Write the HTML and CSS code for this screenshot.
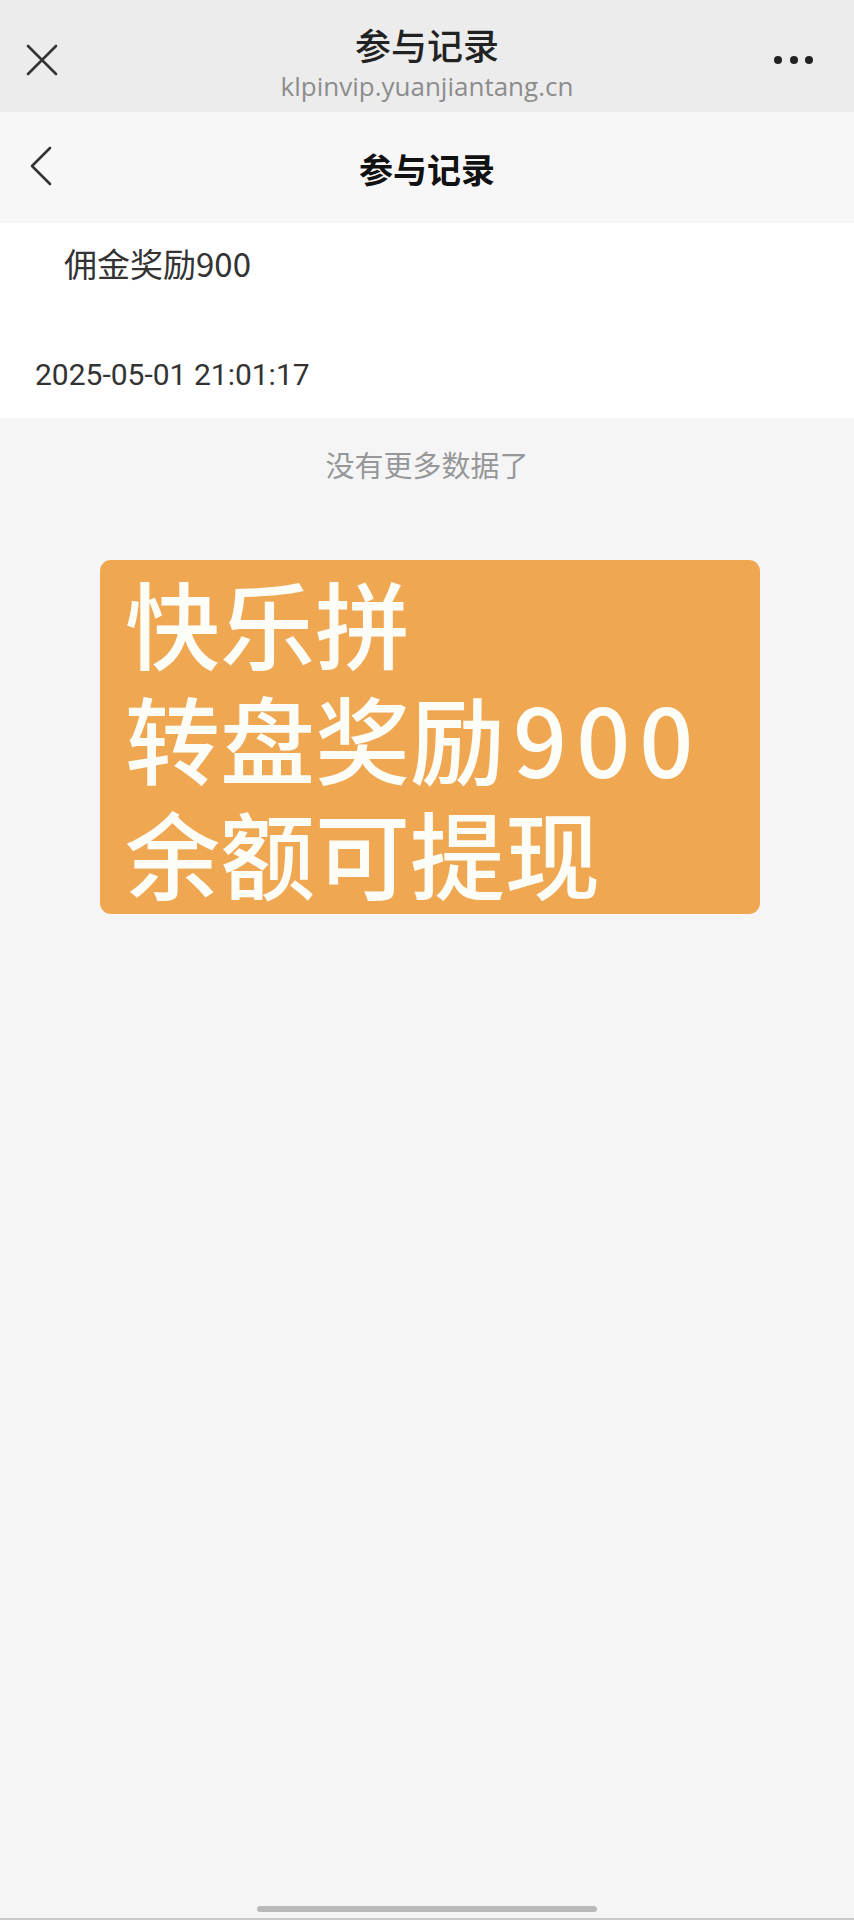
FILE: index.html
```html
<!DOCTYPE html>
<html lang="zh-CN">
<head>
<meta charset="utf-8">
<title>参与记录</title>
<link rel="stylesheet" href="styles.css">
</head>
<body>
<div class="page">
  <header class="topbar">
    <div class="icon-cell">
      <svg class="icon-close" width="32" height="32" viewBox="0 0 32 32"><path d="M2 2 L30 30 M30 2 L2 30" stroke="#333" stroke-width="2.6" stroke-linecap="round" fill="none"/></svg>
    </div>
    <div class="top-titles">
      <div class="top-title">参与记录</div>
      <div class="top-url">klpinvip.yuanjiantang.cn</div>
    </div>
    <div class="icon-cell right">
      <span class="dots"><i></i><i></i><i></i></span>
    </div>
  </header>
  <nav class="navbar">
    <div class="icon-cell">
      <svg class="icon-back" width="24" height="40" viewBox="0 0 24 40"><path d="M21 2 L3 20 L21 38" stroke="#333" stroke-width="2.6" stroke-linecap="round" stroke-linejoin="round" fill="none"/></svg>
    </div>
    <div class="nav-title">参与记录</div>
    <div class="icon-cell"></div>
  </nav>
  <section class="card">
    <div class="card-title">佣金奖励900</div>
    <div class="card-date">2025-05-01 21:01:17</div>
  </section>
  <div class="finished">没有更多数据了</div>
  <div class="promo">
    <div class="promo-line">快乐拼</div>
    <div class="promo-line">转盘奖励<span class="num">900</span></div>
    <div class="promo-line">余额可提现</div>
  </div>
  <div class="home-area"><span class="home-indicator"></span></div>
</div>
</body>
</html>
```

FILE: styles.css
```css
* { box-sizing: border-box; }
html, body { margin: 0; padding: 0; }
body {
  background: #f5f5f5;
  font-family: "Noto Sans CJK SC", "Noto Sans", sans-serif;
  color: #333;
}
.page {
  width: 854px;
  min-height: 1920px;
  display: flex;
  flex-direction: column;
}
.topbar {
  height: 112px;
  background: #ececec;
  display: grid;
  grid-template-columns: 120px 1fr 120px;
  align-items: center;
}
.icon-cell {
  display: flex;
  align-items: center;
  padding-left: 26px;
  height: 100%;
}
.icon-cell.right {
  justify-content: flex-end;
  padding-left: 0;
  padding-right: 41px;
}
.icon-close { margin-top: 8px; }
.dots {
  display: flex;
  gap: 7.5px;
  margin-top: 8px;
}
.dots i {
  display: block;
  width: 8px;
  height: 8px;
  border-radius: 50%;
  background: #222;
}
.top-titles {
  display: flex;
  flex-direction: column;
  align-items: center;
  align-self: start;
  padding-top: 22px;
}
.top-title {
  font-size: 36px;
  line-height: 44px;
  font-weight: 500;
  color: #222;
}
.top-url {
  font-family: "Open Sans", "Roboto", sans-serif;
  font-size: 26px;
  line-height: 32px;
  color: #8c8c8c;
  margin-top: 4px;
}
.navbar {
  height: 111px;
  background: #f7f7f7;
  display: grid;
  grid-template-columns: 120px 1fr 120px;
  align-items: center;
}
.navbar .icon-cell { padding-left: 29px; }
.icon-back { margin-top: -4px; }
.nav-title {
  text-align: center;
  font-size: 34px;
  line-height: 44px;
  font-weight: 700;
  color: #111;
  margin-top: 2px;
}
.card {
  background: #fff;
  padding: 19px 35px 22px;
  display: flex;
  flex-direction: column;
  gap: 70px;
}
.card-title {
  padding-left: 29px;
  font-size: 33px;
  line-height: 42px;
  color: #333;
}
.card-date {
  font-family: "Roboto", "Noto Sans CJK SC", sans-serif;
  font-size: 30px;
  line-height: 42px;
  color: #333;
}
.finished {
  text-align: center;
  font-size: 29px;
  line-height: 40px;
  color: #969799;
  margin-top: 26px;
}
.promo {
  margin: 76px 0 0 100px;
  width: 660px;
  height: 354px;
  background: #efa752;
  border-radius: 11px;
  padding: 4px 0 0 25px;
  color: #fdfdf8;
}
.promo-line {
  font-size: 95px;
  line-height: 115px;
  font-weight: 500;
  white-space: nowrap;
}
.num {
  letter-spacing: 9px;
  margin-left: 8px;
}
.home-area {
  margin-top: auto;
  height: 14px;
  display: flex;
  justify-content: center;
  align-items: flex-start;
  border-bottom: 2px solid #c8c8c8;
}
.home-indicator {
  display: block;
  width: 340px;
  height: 6px;
  border-radius: 3px;
  background: #b9b9b9;
}
```
